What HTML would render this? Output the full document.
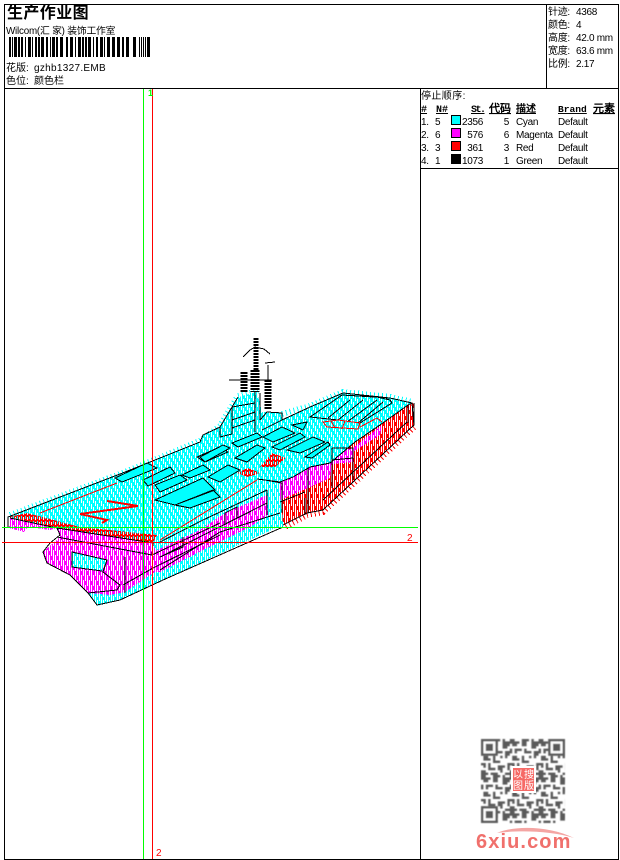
<!DOCTYPE html>
<html><head><meta charset="utf-8"><style>
html,body{margin:0;padding:0;background:#fff;width:620px;height:860px;overflow:hidden}
svg{display:block}
text{font-family:"Liberation Sans","WenQuanYi Zen Hei","Noto Sans CJK SC",sans-serif;font-size:10px;fill:#000}
.t text,.t{letter-spacing:-.3px}
.m{font-family:"Liberation Mono","WenQuanYi Zen Hei",monospace;font-weight:bold;text-decoration:underline;font-size:10px}
</style></head><body>
<svg width="620" height="860" viewBox="0 0 620 860" xmlns="http://www.w3.org/2000/svg">
<defs>
<pattern id="c" width="6" height="9" patternUnits="userSpaceOnUse"><rect width="6" height="9" fill="#0ff"/><path fill="#fff" d="M1 0h1v5H1zM3 3h1v5H3zM5 6h1v3H5zM5 0h1v2H5z"/></pattern>
<pattern id="c2" width="6" height="12" patternUnits="userSpaceOnUse"><rect width="6" height="12" fill="#0ff"/><path fill="#fff" d="M1 0h1v9H1zM3 4h1v8H3zM3 0h1v1H3zM5 8h1v4H5zM5 0h1v5H5z"/></pattern>
<pattern id="mg" width="6" height="15" patternUnits="userSpaceOnUse"><rect width="6" height="15" fill="#f0f"/><path fill="#fff" d="M1 0h1v11H1zM3 5h1v10H3zM3 0h1v1H3zM5 10h1v5H5zM5 0h1v6H5z"/></pattern>
<pattern id="r" width="6" height="18" patternUnits="userSpaceOnUse"><rect width="6" height="18" fill="#f00"/><path fill="#fff" d="M1 0h1v14H1zM3 6h1v12H3zM3 0h1v2H3zM5 12h1v6H5zM5 0h1v8H5z"/></pattern>
<pattern id="rc" width="4" height="5" patternUnits="userSpaceOnUse"><rect width="4" height="5" fill="#f00"/><rect x="1" y="1" width="1" height="3" fill="#0ff"/><rect x="3" y="2" width="1" height="3" fill="#fff"/></pattern>
<pattern id="q" width="36" height="45" patternUnits="userSpaceOnUse" patternTransform="translate(481 739) scale(.8)"><path fill="#5a5a5a" d="M0 0h6v3h6v3H9v3H3V6H0zM15 0h9v3h-3v6h-6zM27 0h3v3h6v6h-3v3h-6zM0 12h3v6H0zM6 12h9v3H9v3H6zM18 12h3v3h6v3h-9zM30 15h6v6h-3v3h-3zM3 21h6v3h3v3H3zM15 21h3v6h6v3h-9zM24 21h3v3h-3zM0 30h6v6H3v-3H0zM9 30h3v6h6v3H9zM21 33h9v3h-3v6h-3v-3h-3zM33 30h3v9h-3zM0 39h6v3h3v3H0zM12 42h9v3h-9zM30 42h6v3h-6z"/></pattern>
<filter id="bl" x="-5%" y="-5%" width="110%" height="110%"><feGaussianBlur stdDeviation=".45"/></filter>
</defs>

<!-- frame -->
<g shape-rendering="crispEdges" fill="#000">
<rect x="4" y="4" width="614" height="1"/>
<rect x="4" y="88" width="614" height="1"/>
<rect x="4" y="859" width="614" height="1"/>
<rect x="4" y="4" width="1" height="856"/>
<rect x="618" y="4" width="1" height="856"/>
<rect x="546" y="4" width="1" height="84"/>
<rect x="420" y="88" width="1" height="772"/>
<rect x="420" y="168" width="198" height="1"/>
</g>

<!-- header -->
<text x="7" y="18" style="font-size:16px;font-weight:bold;letter-spacing:.4px">生产作业图</text>
<text x="6" y="34" style="letter-spacing:-.2px;font-size:9.8px">Wilcom(汇 家) 装饰工作室</text>
<g shape-rendering="crispEdges" fill="#000">
<path d="M9 37h2v20H9zM12 37h1v20h-1zM14 37h3v20h-3zM18 37h2v20h-2zM21 37h2v20h-2zM25 37h1v20h-1zM28 37h3v20h-3zM32 37h1v20h-1zM35 37h2v20h-2zM38 37h2v20h-2zM41 37h3v20h-3zM46 37h2v20h-2zM50 37h1v20h-1zM52 37h3v20h-3zM56 37h2v20h-2zM60 37h3v20h-3zM66 37h2v20h-2zM70 37h3v20h-3zM75 37h1v20h-1zM78 37h3v20h-3zM82 37h2v20h-2zM85 37h2v20h-2zM88 37h3v20h-3zM93 37h1v20h-1zM96 37h2v20h-2zM100 37h3v20h-3zM104 37h1v20h-1zM107 37h3v20h-3zM112 37h3v20h-3zM117 37h3v20h-3zM122 37h2v20h-2zM126 37h3v20h-3zM133 37h3v20h-3zM139 37h1v20h-1zM141 37h1v20h-1zM143 37h1v20h-1zM145 37h1v20h-1zM147 37h3v20h-3z"/>
</g>
<text x="6" y="71">花版: <tspan x="34" style="letter-spacing:.3px">gzhb1327.EMB</tspan></text>
<text x="6" y="84">色位: <tspan x="34">颜色栏</tspan></text>

<g class="t">
<text x="548" y="15">针迹: <tspan x="576">4368</tspan></text>
<text x="548" y="28">颜色: <tspan x="576">4</tspan></text>
<text x="548" y="41">高度: <tspan x="576">42.0 mm</tspan></text>
<text x="548" y="54">宽度: <tspan x="576">63.6 mm</tspan></text>
<text x="548" y="67">比例: <tspan x="576">2.17</tspan></text>
</g>

<!-- table -->
<text x="421" y="99" style="letter-spacing:.4px">停止顺序:</text>
<text x="421" y="112" class="m">#</text>
<text x="436" y="112" class="m">N#</text>
<text x="471" y="112" class="m" style="letter-spacing:-1.5px">St.</text>
<text x="489" y="112" class="m" style="font-size:11px">代码</text>
<text x="516" y="112" class="m">描述</text>
<text x="558" y="112" class="m" style="font-size:9.6px">Brand</text>
<text x="593" y="112" class="m" style="font-size:11px">元素</text>

<g class="t">
<text x="421" y="125">1.</text><text x="435" y="125">5</text><text x="483" y="125" text-anchor="end">2356</text><text x="509" y="125" text-anchor="end">5</text><text x="516" y="125">Cyan</text><text x="558" y="125">Default</text>
<text x="421" y="138">2.</text><text x="435" y="138">6</text><text x="483" y="138" text-anchor="end">576</text><text x="509" y="138" text-anchor="end">6</text><text x="516" y="138">Magenta</text><text x="558" y="138">Default</text>
<text x="421" y="151">3.</text><text x="435" y="151">3</text><text x="483" y="151" text-anchor="end">361</text><text x="509" y="151" text-anchor="end">3</text><text x="516" y="151">Red</text><text x="558" y="151">Default</text>
<text x="421" y="164">4.</text><text x="435" y="164">1</text><text x="483" y="164" text-anchor="end">1073</text><text x="509" y="164" text-anchor="end">1</text><text x="516" y="164">Green</text><text x="558" y="164">Default</text>
</g>
<g shape-rendering="crispEdges" stroke="#000">
<rect x="451.500" y="115.500" width="9" height="9" fill="#0ff"/>
<rect x="451.500" y="128.500" width="9" height="9" fill="#f0f"/>
<rect x="451.500" y="141.500" width="9" height="9" fill="#f00"/>
<rect x="451.500" y="154.500" width="9" height="9" fill="#000"/>
</g>

<!-- ship -->
<g shape-rendering="crispEdges" stroke-linejoin="miter">
<!-- spiky halos -->
<path fill="none" stroke="#0ff" stroke-width="6" stroke-dasharray="1 3" d="M10 515L120 474L200 441L220 426L232 406L238 396L258 391M282 414L310 406L343 392L390 397L412 402"/>
<path fill="none" stroke="#f00" stroke-width="6" stroke-dasharray="1 3" d="M414 427L323 512L307 515L285 527"/>
<path fill="none" stroke="#0ff" stroke-width="4" stroke-dasharray="1 3" d="M98 604L120 598L163 578L276 525"/>
<!-- hull cyan -->
<polygon fill="url(#c2)" points="153,543 257,479 282,483 283,527 278,527 163,580 120,600 97,605 88,593 120,560"/>
<!-- bow magenta -->
<polygon fill="url(#mg)" points="57,528 60,537 43,552 47,563 70,575 88,593 110,595 125,592 155,572 162,572 153,543"/>
<polygon fill="url(#c2)" points="72,552 107,560 102,571 72,567"/>
<!-- hull magenta band -->
<polygon fill="url(#mg)" points="153,552 200,530 225,513 267,495 268,515 250,527 207,548 160,572"/>
<polygon fill="url(#mg)" points="225,525 225,513 237,507 238,518"/>
<polygon fill="url(#mg)" points="283,483 300,478 300,510 283,515"/>
<!-- stern fringe -->
<polygon fill="url(#mg)" points="9,518 57,528 50,530 28,527 24,532 9,528"/>
<!-- red hull -->
<polygon fill="url(#r)" points="408,403 414,403 414,425 323,510 307,513 283,525 280,482 293,477 310,467 330,463 355,442 380,425"/>
<polygon fill="url(#mg)" points="280,482 310,467 330,463 353,448 382,425 380,435 353,452 352,460 332,462 330,478 308,488 280,500"/>
<polygon fill="url(#mg)" points="332,449 353,449 353,462 332,464"/>
<!-- deck -->
<polygon fill="url(#c)" points="8,517 120,474 200,442 203,435 220,427 232,407 238,397 257,392 262,412 280,412 282,420 310,407 343,393 390,398 412,403 408,405 380,425 355,442 330,463 310,467 293,477 280,482 257,479 153,543 57,528 10,518"/>
<!-- red deck bow -->
<polygon fill="url(#rc)" points="9,517 27,513 80,527 157,535 153,543 87,533 50,526"/>
<!-- hatch red on deck -->
<polygon fill="url(#rc)" points="260,467 272,453 286,458 275,467"/>
<polygon fill="url(#rc)" points="237,473 248,468 260,473 248,477"/>

<!-- deck panels -->
<g stroke="#000" fill="#0ff">
<path d="M115 478L147 463L157 468L122 482ZM143 480L170 467L175 473L148 486ZM155 485L180 475L187 480L160 492ZM155 500L203 478L215 490L175 505ZM197 457L220 447L228 452L205 462ZM182 475L203 465L210 470L190 478ZM175 505L190 508L220 497L213 490Z"/>
<path d="M208 477L228 465L240 470L220 482ZM235 458L257 445L265 448L247 462ZM200 457L223 445L230 448L205 462ZM232 443L257 433L262 437L238 447ZM272 447L300 433L305 437L280 450ZM287 450L313 437L325 442L300 453ZM305 457L328 442L330 445L312 458ZM263 437L282 427L295 433L273 442ZM292 425L307 422L303 430Z"/>
<path fill="url(#c)" d="M310 417L342 395L377 397L390 400L392 403L360 423L338 420Z"/>
</g>
<g fill="none" stroke="#000">
<path d="M8 527V517L120 474L200 442L203 435L220 427L232 407L238 397"/>
<path d="M282 420L310 407L343 393L390 398L412 403L414 425M412 403L408 405L380 425L355 442L330 463L310 467L293 477L280 482L257 479M153 543L57 528L10 518"/>
<path d="M328 418L350 400M338 420L363 400M347 422L377 400M358 423L383 402M342 395L390 398"/>
<path d="M220 427V437L232 434V407L255 403M232 420L255 412M232 428L255 420M255 392V432M260 393V420M260 420L267 412L282 413L282 420L262 430"/>
<!-- cyan hull lines -->
<path d="M267 490L203 520L160 542M267 503L160 557M280 513L220 532L160 570M283 527L163 580L120 600L97 605L88 593"/>
<!-- bow lines -->
<path d="M57 528L60 535L50 543L43 552L47 563L70 575L88 593L117 590L120 585L103 572L107 560L72 552V567L102 571M57 537L152 555L153 543M125 557V593M123 585L153 568L220 535M152 555L220 523M160 557L183 547V537"/>
<path d="M225 525V513L237 507V518M265 480L282 483V513M267 490V515"/>
<!-- red hull lines -->
<path d="M408 405V423M407 422L323 500M414 403V425L323 510L307 513L283 525M308 468V513M305 498V515M280 502L305 492M332 448H353V480M332 448V488M332 460L353 458"/>
</g>

<!-- red lines -->
<g fill="none" stroke="#f00">
<path d="M40 513L117 483"/>
<path d="M107 501L138 506L80 514L107 520L102 523" stroke-width="2"/>
<path d="M160 540L257 480"/>
<path d="M323 422L327 427L358 429L360 423L338 420Z"/>
<path d="M331 421L335 428M345 421L342 429"/>
<path d="M360 427L377 418L382 422"/>
</g>

<!-- tower / masts -->
<path fill="none" stroke="#000" stroke-width="5" stroke-dasharray="2 1" d="M256 338V370"/>
<path fill="none" stroke="#000" stroke-width="9" stroke-dasharray="2 1" d="M255 370V392"/>
<path fill="none" stroke="#000" stroke-width="7" stroke-dasharray="2 1" d="M244 372V392"/>
<path fill="none" stroke="#000" stroke-width="7" stroke-dasharray="2 1" d="M268 380V410"/>
<path fill="none" stroke="#000" d="M229 380H272M243 357L250 350L255 347L264 349L270 354M265 363L275 362M268 365V380"/>
</g>

<!-- crosshairs -->
<g shape-rendering="crispEdges">
<rect x="143" y="89" width="1" height="770" fill="#0f0"/>
<rect x="2" y="527" width="416" height="1" fill="#0f0"/>
<rect x="152" y="89" width="1" height="770" fill="#f00"/>
<rect x="2" y="542" width="416" height="1" fill="#f00"/>
</g>
<text x="148" y="96" style="font-size:9px;font-weight:bold;fill:#0f0">1</text>
<text x="407" y="541" style="fill:#f00">2</text>
<text x="156" y="856" style="fill:#f00">2</text>

<!-- QR -->
<g filter="url(#bl)">
<rect x="481" y="739" width="84" height="84" fill="url(#q)"/>
<g fill="#fff" stroke="#5a5a5a" stroke-width="2.4">
<rect x="482.200" y="740.200" width="14.400" height="14.400"/>
<rect x="549.400" y="740.200" width="14.400" height="14.400"/>
<rect x="482.200" y="807.400" width="14.400" height="14.400"/>
</g>
<g fill="#5a5a5a">
<rect x="485.800" y="743.800" width="7.200" height="7.200"/>
<rect x="553" y="743.800" width="7.200" height="7.200"/>
<rect x="485.800" y="811" width="7.200" height="7.200"/>
</g>
</g>
<rect x="511" y="766" width="25" height="27" fill="#fff"/>
<rect x="513" y="768" width="21" height="23" fill="#f66a66"/>
<text x="513" y="778" style="font-size:10px;fill:#fff">以</text>
<text x="513" y="789" style="font-size:10px;fill:#fff">图</text>
<text x="524" y="778" style="font-size:10px;fill:#fff">搜</text>
<text x="524" y="789" style="font-size:10px;fill:#fff">版</text>

<!-- logo -->
<path d="M497 833C515 825 550 826 574 838C552 831 520 830 497 833Z" fill="#f4a5a3"/>
<text x="476" y="848" style="font-size:20px;font-weight:bold;fill:#f0706c;letter-spacing:1.1px;font-family:'Liberation Sans',sans-serif">6xiu.com</text>
</svg>
</body></html>
